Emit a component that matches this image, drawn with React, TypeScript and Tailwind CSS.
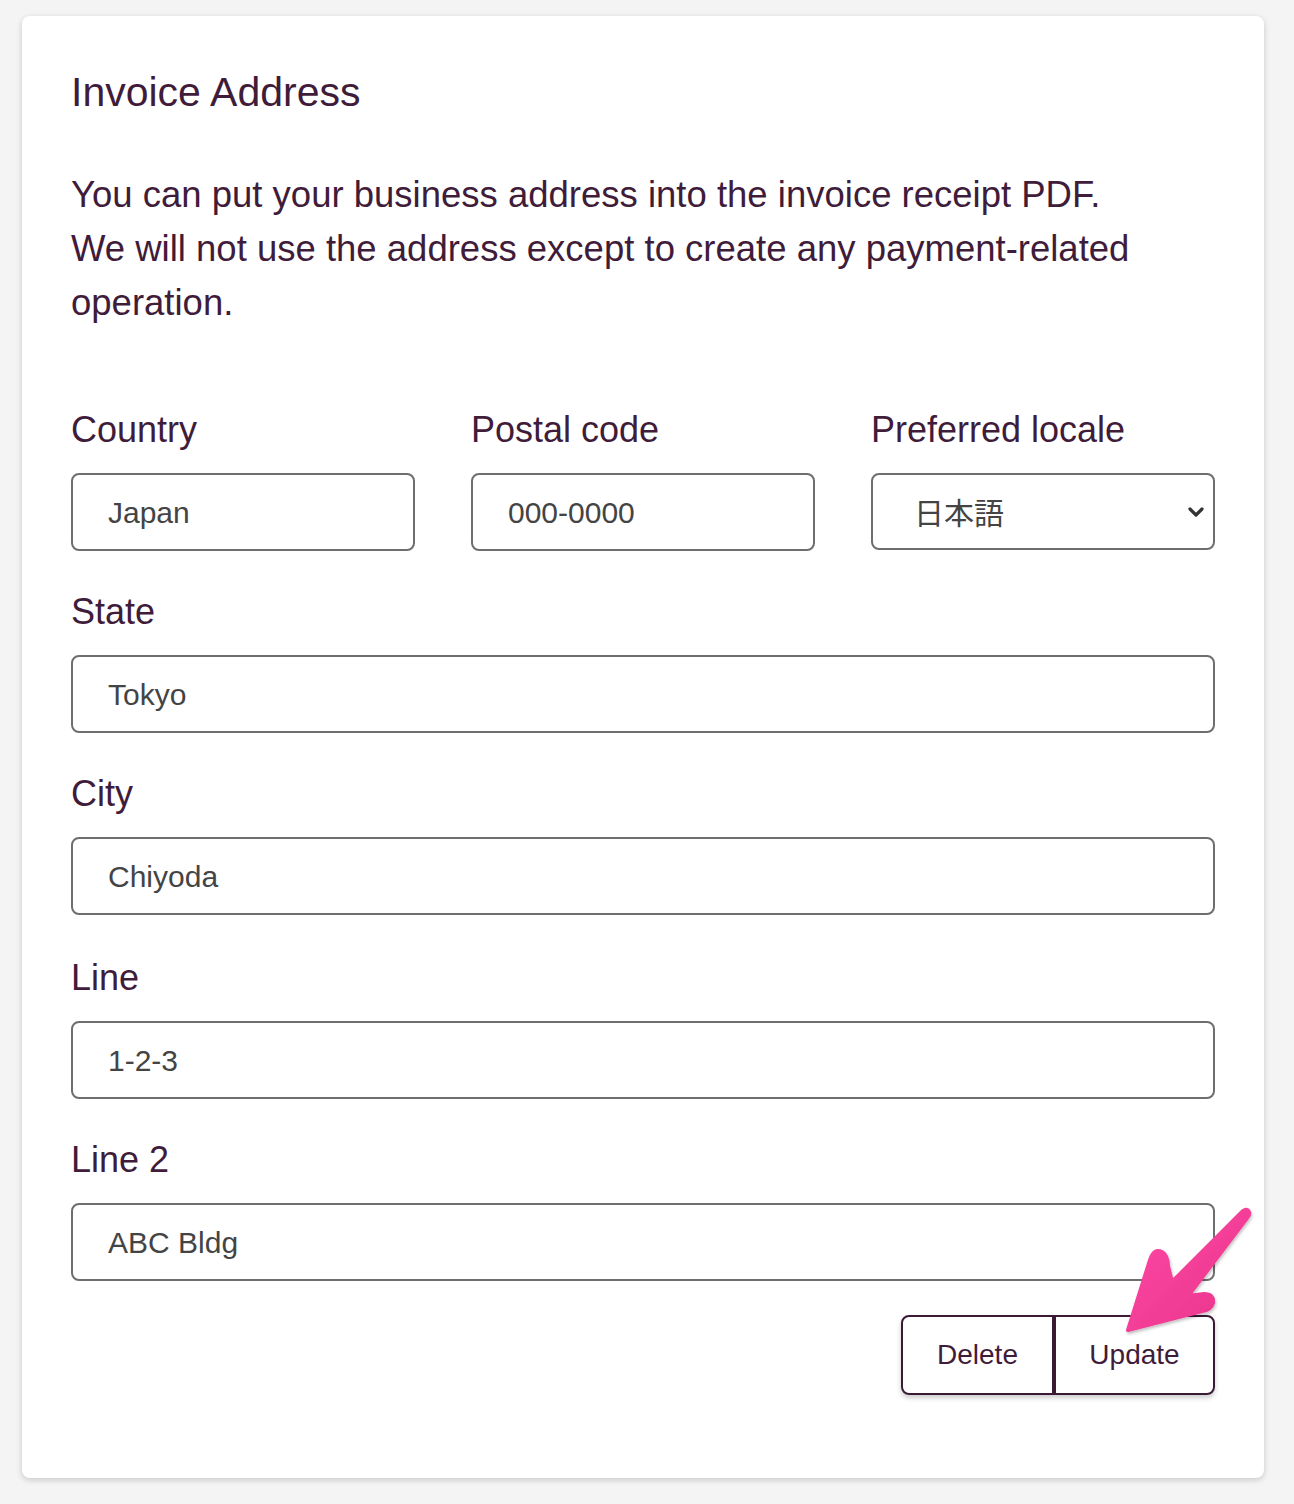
import React from "react";

const font = { fontFamily: '"Liberation Sans", Arial, "Noto Sans CJK JP", sans-serif' };

function Field({ label, value, className = "" }: { label: string; value: string; className?: string }) {
  return (
    <div className={"flex flex-col " + className}>
      <div className="text-[36px] leading-[44px] text-[#3f1c3a]">{label}</div>
      <div className="mt-[21px] h-[78px] rounded-[8px] border-2 border-[#6e6e6e] flex items-center pl-[35px] text-[30px] text-[#444444]">
        {value}
      </div>
    </div>
  );
}

function Arrow() {
  return (
    <svg
      className="absolute left-[1110px] top-[1200px] pointer-events-none"
      width="150"
      height="145"
      viewBox="0 0 150 145"
    >
      <defs>
        <linearGradient id="pk" x1="0" y1="0" x2="1" y2="1">
          <stop offset="0" stopColor="#ff4aa6" />
          <stop offset="1" stopColor="#e8338a" />
        </linearGradient>
        <filter id="sh" x="-20%" y="-20%" width="140%" height="140%">
          <feDropShadow dx="1" dy="2" stdDeviation="1.5" floodColor="#000" floodOpacity="0.25" />
        </filter>
      </defs>
      <path
        d="M18 130 L40 60 Q44 48 52 52 Q58 56 58 66 L62 82 L133 11 Q137 8 139 12 Q140 15 137 18 L78 96 L94 94 Q104 94 103 103 Q101 110 92 111 Z"
        fill="url(#pk)"
        stroke="url(#pk)"
        strokeWidth="4"
        strokeLinejoin="round"
        filter="url(#sh)"
      />
    </svg>
  );
}

export default function App() {
  return (
    <div className="min-h-screen bg-[#f4f4f4] pt-[16px] px-[22px] pb-[26px] relative" style={font}>
      <div className="w-[1242px] bg-white rounded-[8px] shadow-[0_2px_6px_rgba(0,0,0,0.18)] pt-[54px] pb-[83px] pl-[49px] pr-[49px]">
        <h1 className="text-[41px] leading-[44px] text-[#3f1c3a]">Invoice Address</h1>
        <p className="mt-[54px] text-[36.5px] leading-[54px] text-[#3f1c3a]">
          You can put your business address into the invoice receipt PDF.
          <br />
          We will not use the address except to create any payment-related
          <br />
          operation.
        </p>
        <div className="mt-[78px] grid grid-cols-3 gap-x-[56px]">
          <Field label="Country" value="Japan" />
          <Field label="Postal code" value="000-0000" />
          <div className="flex flex-col">
            <div className="text-[36px] leading-[44px] text-[#3f1c3a]">Preferred locale</div>
            <div className="mt-[21px] h-[77px] rounded-[8px] border-2 border-[#6e6e6e] flex items-center justify-between pl-[41px] pr-[8px] text-[30px] text-[#444444]">
              <span style={{ fontFamily: '"Noto Sans CJK JP", sans-serif' }}>日本語</span>
              <svg width="18" height="12" viewBox="0 0 18 12">
                <path d="M3 3 L9 9 L15 3" fill="none" stroke="#333" strokeWidth="3.2" strokeLinecap="round" strokeLinejoin="round" />
              </svg>
            </div>
          </div>
        </div>
        <div className="mt-[39px] flex flex-col">
          <Field label="State" value="Tokyo" />
          <Field label="City" value="Chiyoda" className="mt-[39px]" />
          <Field label="Line" value="1-2-3" className="mt-[41px]" />
          <Field label="Line 2" value="ABC Bldg" className="mt-[39px]" />
        </div>
        <div className="mt-[34px] flex justify-end">
          <div className="flex shadow-[0_3px_5px_rgba(0,0,0,0.2)] rounded-[8px]">
            <button className="w-[153px] h-[80px] border-2 border-[#3a1a35] rounded-l-[8px] text-[28px] text-[#3f1c3a] bg-white">
              Delete
            </button>
            <button className="w-[162px] h-[80px] border-2 border-l-[3px] border-[#3a1a35] rounded-r-[8px] text-[28px] text-[#3f1c3a] bg-white -ml-[1px]">
              Update
            </button>
          </div>
        </div>
      </div>
      <Arrow />
    </div>
  );
}
